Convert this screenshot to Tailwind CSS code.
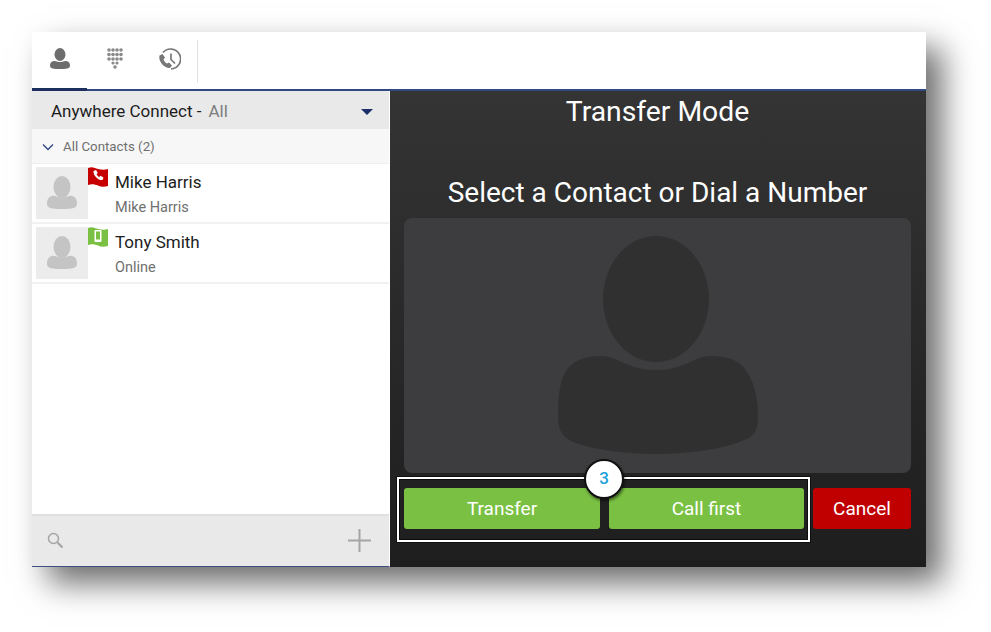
<!DOCTYPE html>
<html lang="en">
<head>
    <meta charset="UTF-8">
    <title>Transfer Mode</title>
    <script src="https://cdn.jsdelivr.net/npm/@tailwindcss/browser@4"></script>
</head>
<body class="bg-white w-[991px] h-[632px] overflow-hidden font-['Roboto',sans-serif]">
    <div class="pt-8 pl-8">
        <div class="w-[894px] h-[535px] flex flex-col bg-white shadow-[16px_16px_30px_rgba(0,0,0,0.58)]">
            <!-- top tabs -->
            <div class="h-[59px] flex border-b-2 border-[#2f4a80] shrink-0 relative">
                <div class="w-[55px] h-[59px] flex items-center justify-center border-b-[3px] border-[#1d2f5f] pb-0.5">
                    <svg width="22" height="22" viewBox="0 0 22 22"><ellipse cx="11" cy="6.500" rx="5.500" ry="6.500" fill="#6d6d6d"/><path d="M1 18c0-3 1-4.500 4-5 2-.4 3 1 6 1s4-1.400 6-1c3 .5 4 2 4 5 0 2.500-4 3-10 3S1 20.500 1 18z" fill="#6d6d6d"/></svg>
                </div>
                <div class="w-[56px] flex items-center justify-center pb-1">
                    <svg width="16" height="21" viewBox="0 0 16 21" fill="#8a8a8a">
                        <circle cx="2" cy="2" r="1.800"/><circle cx="6" cy="2" r="1.800"/><circle cx="10" cy="2" r="1.800"/><circle cx="14" cy="2" r="1.800"/>
                        <circle cx="2" cy="6.500" r="1.800"/><circle cx="6" cy="6.500" r="1.800"/><circle cx="10" cy="6.500" r="1.800"/><circle cx="14" cy="6.500" r="1.800"/>
                        <circle cx="2" cy="11" r="1.800"/><circle cx="6" cy="11" r="1.800"/><circle cx="10" cy="11" r="1.800"/><circle cx="14" cy="11" r="1.800"/>
                        <circle cx="6" cy="15" r="1.600"/><circle cx="10" cy="15" r="1.600"/><circle cx="8" cy="19" r="1.800"/>
                    </svg>
                </div>
                <div class="w-[54px] flex items-center justify-center pb-1 pr-[3px]">
                    <svg width="24" height="24" viewBox="0 0 24 24" fill="none">
                        <path d="M6 5.500A10 10 0 1 1 14 22" stroke="#777" stroke-width="1.700"/>
                        <path d="M14 6.500V12.500L18 16.500" stroke="#777" stroke-width="1.700"/>
                        <path d="M2.500 8.500l3 -1.500 2.500 3.500 -1.500 2c.6 1.800 1.600 3 3.500 4l2-1 3 3 -2 2.500c-6 .5 -12 -7 -10.500 -12.500z" fill="#777"/>
                    </svg>
                </div>
                <div class="w-px h-[43px] mt-2 bg-[#e2e2e2]"></div>
            </div>
            <div class="flex flex-1 min-h-0">
                <!-- contacts -->
                <div class="w-[358px] shrink-0 flex flex-col bg-white border-b border-[#3b4f85] border-r border-r-white">
                    <div class="h-[38px] bg-[#e9e9e9] flex items-center pl-[19px] pr-[16px] pt-[3px] text-[17px] text-[#1c1c1c]">
                        <span>Anywhere Connect -</span>
                        <span class="ml-[7px] text-[#7d7d7d]">All</span>
                        <span class="ml-auto w-0 h-0 border-x-[6px] border-x-transparent border-t-[6px] border-t-[#1d2f6b]"></span>
                    </div>
                    <div class="h-[35px] bg-[#f7f7f7] flex items-center pl-[10px] pt-px text-[13.300px] text-[#6f6f6f] border-b border-[#efefef]">
                        <svg width="12" height="8" viewBox="0 0 12 8" fill="none"><path d="M1 1.500l5 5 5-5" stroke="#2f4a80" stroke-width="1.400"/></svg>
                        <span class="ml-[9px]">All Contacts (2)</span>
                    </div>
                    <div class="h-[60px] flex items-center pl-1 border-b-2 border-[#f1f1f1] relative">
                        <div class="w-[52px] h-[52px] bg-[#ececec] flex items-center justify-center shrink-0">
                            <svg width="30" height="34" viewBox="0 0 30 34" fill="#c4c4c4"><ellipse cx="15" cy="11" rx="8.500" ry="11"/><path d="M0 28c0-4 1-7 5-8 3-.7 5 1.500 10 1.500s7-2.200 10-1.500c4 1 5 4 5 8 0 4-4 5-15 5S0 32 0 28z"/></svg>
                        </div>
                        <svg class="absolute left-[56px] top-[3px]" width="20" height="20" viewBox="0 0 20 20"><path d="M0 1c4-2 7 0 10 1 4 1 7 1 10 0v17c-4 1-7 1-10-.5-3-1-6-2-10-.5z" fill="#c60000"/><path d="M5.500 4l2.500-1 1.800 3-1.300 1.300c.6 1.200 1.400 2 2.700 2.700l1.300-1.300 3 1.800-1 2.500c-4 1-9.500-4.500-9-9z" fill="#fff"/></svg>
                        <div class="ml-[27px] pt-[3px]">
                            <div class="text-[17px] leading-5 text-[#1c1c1c]">Mike Harris</div>
                            <div class="mt-[6px] text-[14.500px] leading-5 text-[#6f6f6f]">Mike Harris</div>
                        </div>
                    </div>
                    <div class="h-[60px] flex items-center pl-1 border-b-2 border-[#f1f1f1] relative">
                        <div class="w-[52px] h-[52px] bg-[#ececec] flex items-center justify-center shrink-0">
                            <svg width="30" height="34" viewBox="0 0 30 34" fill="#c4c4c4"><ellipse cx="15" cy="11" rx="8.500" ry="11"/><path d="M0 28c0-4 1-7 5-8 3-.7 5 1.500 10 1.500s7-2.200 10-1.500c4 1 5 4 5 8 0 4-4 5-15 5S0 32 0 28z"/></svg>
                        </div>
                        <svg class="absolute left-[56px] top-[3px]" width="20" height="20" viewBox="0 0 20 20"><path d="M0 1c4-2 7 0 10 1 4 1 7 1 10 0v17c-4 1-7 1-10-.5-3-1-6-2-10-.5z" fill="#7ac143"/><rect x="6.500" y="3" width="7" height="12" rx="1" fill="#fff"/><rect x="8" y="4.500" width="4" height="8" fill="#7ac143"/></svg>
                        <div class="ml-[27px] pt-[3px]">
                            <div class="text-[17px] leading-5 text-[#1c1c1c]">Tony Smith</div>
                            <div class="mt-[6px] text-[14.500px] leading-5 text-[#6f6f6f]">Online</div>
                        </div>
                    </div>
                    <div class="flex-1"></div>
                    <div class="h-[52px] bg-[#e9e9e9] border-t-2 border-[#e0e0e0] flex items-center justify-between pl-[15px] pr-[18px] pb-0.5">
                        <svg width="17" height="17" viewBox="0 0 17 17" fill="none"><circle cx="6.500" cy="6.500" r="5" stroke="#a5a5a5" stroke-width="1.500"/><path d="M10.500 10.500l5 5" stroke="#a5a5a5" stroke-width="2.200"/></svg>
                        <svg width="23" height="23" viewBox="0 0 23 23" fill="none"><path d="M11.500 0v23M0 11.500h23" stroke="#a5a5a5" stroke-width="2"/></svg>
                    </div>
                </div>
                <!-- transfer panel -->
                <div class="flex-1 flex flex-col items-center pl-[14px] pr-[15px] relative bg-gradient-to-b from-[#343434] to-[#1e1e1e]">
                    <h1 class="mt-1 text-[28.300px] leading-[34px] text-white">Transfer Mode</h1>
                    <p class="mt-[47px] text-[28px] leading-[34px] text-white">Select a Contact or Dial a Number</p>
                    <div class="mt-2 w-[507px] h-[255px] rounded-lg bg-[#3d3d3f] flex items-end justify-center pb-[19px]">
                        <svg width="200" height="218" viewBox="0 0 200 218" fill="#303030">
                            <ellipse cx="98" cy="63" rx="53" ry="63"/>
                            <path d="M0 180c0-25 3-38 10-48 8-9 20-12 33-12 18 0 25 14 55 14s37-14 55-14c13 0 27 3 34 13 8 11 13 25 13 47 0 14-3 20-14 24-20 9-55 14-88 14s-68-5-87-14C3 199 0 192 0 180z"/>
                        </svg>
                    </div>
                    <div class="mt-[15px] w-[507px] flex gap-[9px] text-[19px] text-white">
                        <button class="w-[196px] h-[41px] pt-0.5 rounded-[3px] bg-[#7ac143]">Transfer</button>
                        <button class="w-[195px] h-[41px] pt-0.5 rounded-[3px] bg-[#7ac143]">Call first</button>
                        <button class="w-[98px] h-[41px] pt-0.5 rounded-[3px] bg-[#c00000]">Cancel</button>
                    </div>
                    <!-- annotation -->
                    <div class="absolute left-[7px] top-[386px] w-[413px] h-[65px] border-2 border-white shadow-[0_0_0_1px_rgba(0,0,0,0.5),inset_0_0_0_1px_rgba(0,0,0,0.6)]"></div>
                    <div class="absolute left-[194px] top-[368px] w-[40px] h-[40px] rounded-full bg-white border-2 border-[#111] shadow-[1px_2px_3px_rgba(0,0,0,0.5)] flex items-center justify-center text-[17px] font-medium text-[#1f9fd8]">3</div>
                </div>
            </div>
        </div>
    </div>
</body>
</html>
